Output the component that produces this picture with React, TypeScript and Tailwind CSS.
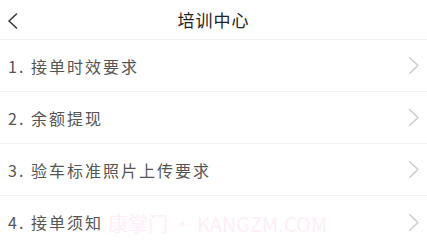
import React from 'react';

const items = ['1. 接单时效要求', '2. 余额提现', '3. 验车标准照片上传要求', '4. 接单须知'];

const ChevronRight = () => (
  <svg width="12" height="19" viewBox="0 0 12 19" fill="none">
    <path d="M1.5 1.5 L10 9.5 L1.5 17.5" stroke="#cccccc" strokeWidth="1.4" strokeLinecap="round" strokeLinejoin="round" />
  </svg>
);

export default function App() {
  return (
    <div
      className="relative w-[427px] h-[244px] overflow-hidden bg-white"
      style={{ fontFamily: '"Noto Sans CJK SC", "Noto Sans", sans-serif' }}
    >
      <div className="relative flex items-center justify-center h-[40px] border-b border-[#f1f1f1]">
        <svg className="absolute left-[7px] top-[13px]" width="11" height="16" viewBox="0 0 11 16" fill="none">
          <path d="M9.5 1 L2 8 L9.5 15" stroke="#333" strokeWidth="1.5" strokeLinecap="round" strokeLinejoin="round" />
        </svg>
        <span className="text-[17px] tracking-[1px] text-[#222]">培训中心</span>
      </div>

      {items.map((label, i) => (
        <div
          key={label}
          className={`flex items-center justify-between h-[52px] pl-[8px] pr-[7px] ${
            i < items.length - 1 ? 'border-b border-[#f2f2f2]' : ''
          }`}
        >
          <span className="text-[16px] tracking-[2px] text-[#555]">{label}</span>
          <ChevronRight />
        </div>
      ))}

      <div className="absolute left-[108px] top-[209px] text-[20px] text-[#fdeef7] pointer-events-none whitespace-nowrap">
        康掌门 • KANGZM.COM
      </div>
    </div>
  );
}
